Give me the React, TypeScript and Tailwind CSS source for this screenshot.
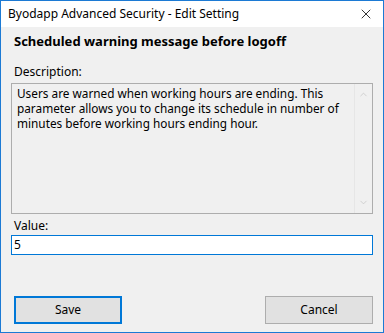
import { X, ChevronUp, ChevronDown } from "lucide-react";

const font = { fontFamily: '"Noto Sans", "Open Sans", sans-serif' };

export default function App() {
  return (
    <div
      className="w-[384px] h-[333px] flex flex-col bg-[#f0f0f0] border border-[#1c7ad4] text-[12px] text-black overflow-hidden"
      style={font}
    >
      {/* Title bar */}
      <div className="h-[26px] bg-white flex items-center justify-between pl-[7px] pr-[9px] shrink-0">
        <span className="text-[12px] leading-none">Byodapp Advanced Security - Edit Setting</span>
        <X size={16} strokeWidth={1.2} className="text-black" />
      </div>

      <div className="flex flex-col px-[10px] flex-1">
        {/* Heading */}
        <h1 className="font-bold text-[13px] leading-none mt-[8px] ml-[3px]">
          Scheduled warning message before logoff
        </h1>

        {/* Description */}
        <div className="mt-[18px] ml-[3px] leading-none">Description:</div>
        <div className="mt-[5px] h-[131px] border border-[#adadad] flex">
          <p className="flex-1 pl-[5px] pr-[4px] pt-[2px] leading-[15px] text-[11.8px]">
            Users are warned when working hours are ending. This parameter allows you to change its schedule in number of minutes before working hours ending hour.
          </p>
          <div className="w-[18px] border-l border-[#e6e6e6] flex flex-col justify-between items-center py-[5px] text-[#c2c2c2]">
            <ChevronUp size={11} strokeWidth={1.5} />
            <ChevronDown size={11} strokeWidth={1.5} />
          </div>
        </div>

        {/* Value */}
        <div className="mt-[6px] ml-[3px] leading-none">Value:</div>
        <div className="mt-[3px] h-[20px] border border-[#0078d7] bg-white flex items-center pl-[2px]">
          5
        </div>

        {/* Buttons */}
        <div className="mt-[41px] flex justify-between pl-[3px]">
          <button className="w-[108px] h-[28px] border-2 border-[#0078d7] bg-[#e1e1e1] text-[12px]">
            Save
          </button>
          <button className="w-[108px] h-[28px] border border-[#adadad] bg-[#e1e1e1] text-[12px]">
            Cancel
          </button>
        </div>
      </div>
    </div>
  );
}
